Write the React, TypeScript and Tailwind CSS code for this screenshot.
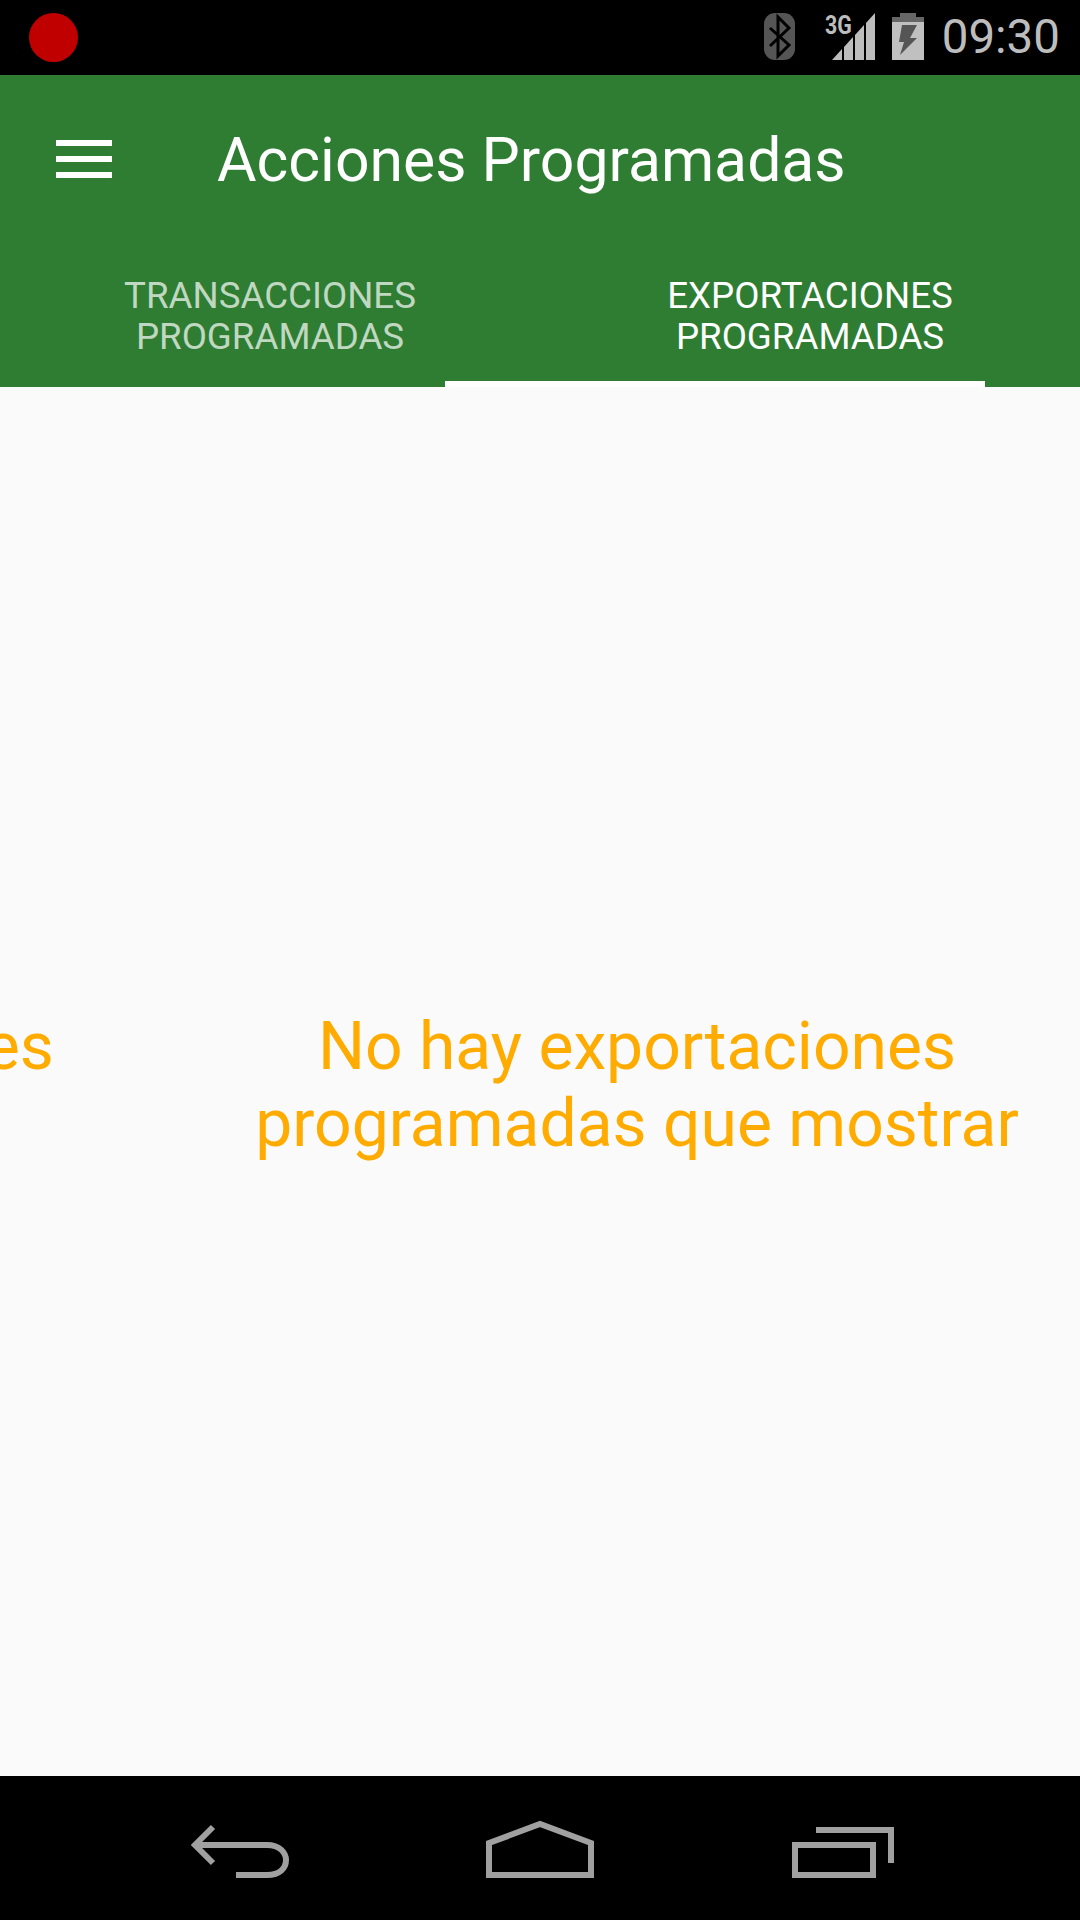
import React from 'react';

const roboto = "font-['Roboto',sans-serif]";

const StatusBar = () => (
  <div className="h-[75px] bg-black flex items-center pl-[29px] pr-[20px] shrink-0">
    <div className="w-[49px] h-[49px] rounded-full bg-[#c00000] -mt-[1px]" />
    <div className="flex-1" />
    <svg width="31" height="47" viewBox="0 0 31 47" className="-mt-[2px]">
      <rect width="31" height="47" rx="11" fill="#555555" />
      <path d="M6 15L25 32L14 43V4L25 15L6 33" fill="none" stroke="#000" strokeWidth="3" />
    </svg>
    <div className="relative w-[50px] h-[47px] ml-[30px] -mt-[2px]">
      <svg width="43" height="47" viewBox="0 0 43 47" className="absolute left-[7px] top-0">
        <polygon points="0,47 10,36 10,47" fill="#bdbdbd" />
        <polygon points="12,34 21,24 21,47 12,47" fill="#bdbdbd" />
        <polygon points="23,22 32,12 32,47 23,47" fill="#bdbdbd" />
        <polygon points="34,10 43,0 43,47 34,47" fill="#bdbdbd" />
      </svg>
      <span className={`absolute left-0 top-0 ${roboto} font-bold text-[26px] leading-[24px] text-[#bdbdbd] scale-x-[0.82] origin-left`}>3G</span>
    </div>
    <svg width="32" height="47" viewBox="0 0 32 47" className="ml-[17px] -mt-[2px]">
      <rect x="8" y="0" width="16" height="6" fill="#666666" />
      <rect x="0" y="4" width="32" height="5" fill="#666666" />
      <rect x="0" y="9" width="32" height="38" fill="#c0c0c0" />
      <polygon points="10,12 25,12 18,25 25,25 8,42 12,29 7,29" fill="#555555" />
    </svg>
    <span className={`ml-[18px] ${roboto} font-normal text-[47.5px] leading-none text-[#bdbdbd]`}>09:30</span>
  </div>
);

const AppBar = () => (
  <div className="h-[168px] flex items-center">
    <div className="ml-[56px] w-[56px] flex flex-col gap-[10px]">
      <div className="h-[6px] bg-white" />
      <div className="h-[6px] bg-white" />
      <div className="h-[6px] bg-white" />
    </div>
    <h1 className={`ml-[105px] mt-[5px] ${roboto} text-[60.7px] leading-none text-white`}>Acciones Programadas</h1>
  </div>
);

const Tabs = () => (
  <div className={`relative h-[144px] grid grid-cols-2 ${roboto} text-[36.7px] leading-[41px] text-center`}>
    <div className="flex items-center justify-center pt-[2px] text-[#c0d8c1]">
      <span>TRANSACCIONES<br />PROGRAMADAS</span>
    </div>
    <div className="flex items-center justify-center pt-[2px] text-white">
      <span>EXPORTACIONES<br />PROGRAMADAS</span>
    </div>
    <div className="absolute left-[445px] bottom-0 w-[540px] h-[6px] bg-white" />
  </div>
);

const Panel = ({ children }: { children: React.ReactNode }) => (
  <div className="w-[900px] shrink-0 flex items-center justify-center text-center">
    <p className={`${roboto} text-[66px] leading-[77px] text-[#ffab00]`}>{children}</p>
  </div>
);

const NavBar = () => (
  <div className="h-[144px] bg-black shrink-0">
    <svg width="1080" height="144" viewBox="0 1776 1080 144" fill="none" stroke="#a0a0a0" strokeWidth="6" className="block">
      <path d="M213 1827L195 1845L213 1863" />
      <path d="M195 1845H267C280 1845 286 1853 286 1860C286 1868 280 1875 267 1875H236" />
      <path d="M489 1843L540 1824L591 1843V1875H489Z" />
      <rect x="795" y="1845" width="78" height="30" />
      <path d="M816 1830H891V1863" />
    </svg>
  </div>
);

export default function App() {
  return (
    <div className="w-[1080px] h-[1920px] flex flex-col overflow-hidden bg-[#fafafa]">
      <StatusBar />
      <div className="bg-[#2e7d32] shrink-0">
        <AppBar />
        <Tabs />
      </div>
      <div className="flex-1 flex overflow-hidden pt-[6px]">
        <div className="flex -ml-[713px]">
          <Panel>No hay transacciones<br />programadas</Panel>
          <Panel>No hay exportaciones<br />programadas que mostrar</Panel>
        </div>
      </div>
      <NavBar />
    </div>
  );
}
